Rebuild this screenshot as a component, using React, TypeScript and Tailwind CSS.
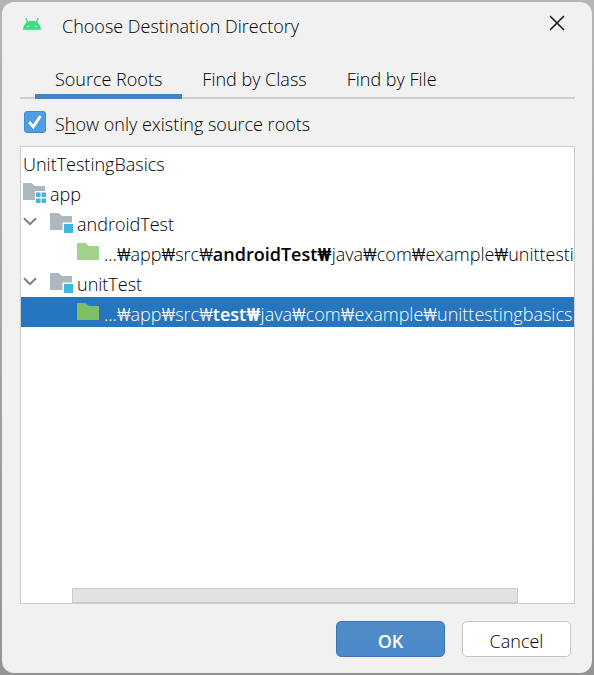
import { useState } from "react";
import type { ReactNode } from "react";

const TABS = ["Source Roots", "Find by Class", "Find by File"];

function AndroidIcon() {
  return (
    <svg width="20" height="14" viewBox="0 0 20 14" fill="none" aria-hidden className="shrink-0">
      <path d="M1 12.8C1.300 7.200 5 3.800 10 3.800s8.700 3.400 9 9Z" fill="#3ddc84" />
      <path d="M5.800 5.600 4 1.500M14.200 5.600 16 1.500" stroke="#3ddc84" strokeWidth="1.300" strokeLinecap="round" />
      <circle cx="5.900" cy="9.500" r="0.800" fill="#f1f1f1" />
      <circle cx="14.100" cy="9.500" r="0.800" fill="#f1f1f1" />
    </svg>
  );
}

function CloseIcon() {
  return (
    <svg width="16" height="16" viewBox="0 0 16 16" fill="none" aria-hidden>
      <path d="M1 1l14 14M15 1L1 15" stroke="#111" strokeWidth="1.500" />
    </svg>
  );
}

function ChevronDown() {
  return (
    <svg width="14" height="9" viewBox="0 0 14 9" fill="none" aria-hidden>
      <path d="M1 1.200l6 6 6-6" stroke="#7f7f7f" strokeWidth="2" />
    </svg>
  );
}

function FolderIcon({ kind }: { kind: "group" | "module" | "test" | "testSelected" }) {
  const fill =
    kind === "test" ? "#a0d38c" : kind === "testSelected" ? "#7fbf63" : "#adb8be";
  return (
    <svg width="24" height="22" viewBox="0 0 24 22" aria-hidden className="shrink-0">
      {kind === "group" && (
        <>
          <path d="M0 2h8.500L12 5h10v5H12v9H0Z" fill={fill} />
          <path d="M13 11.500h4.500V16H13ZM18.500 11.500H23V16h-4.500ZM13 17.500h4.500V22H13ZM18.500 17.500H23V22h-4.500Z" fill="#40b6e0" />
        </>
      )}
      {kind === "module" && (
        <>
          <path d="M0 2h8.500L12 5h10v6.500h-9.500V19H0Z" fill={fill} />
          <path d="M14 13h9v9h-9Z" fill="#40b6e0" />
        </>
      )}
      {(kind === "test" || kind === "testSelected") && (
        <path d="M0 2h8.500L12 5h10v14H0Z" fill={fill} />
      )}
    </svg>
  );
}

function TreeRow({ children, selected }: { children: ReactNode; selected?: boolean }) {
  return (
    <li
      role="treeitem"
      aria-selected={!!selected}
      className={
        selected
          ? "flex h-[30px] items-center whitespace-nowrap bg-[#2675bf] text-white"
          : "flex h-[30px] items-center whitespace-nowrap"
      }
    >
      {children}
    </li>
  );
}

function ModuleRow({ name }: { name: string }) {
  return (
    <TreeRow>
      <button type="button" aria-label={`Collapse ${name}`} className="w-[29px] shrink-0 pb-[2px] pl-[2px]">
        <ChevronDown />
      </button>
      <FolderIcon kind="module" />
      <span className="pl-[3px] pt-1">{name}</span>
    </TreeRow>
  );
}

function Won() {
  return <span className="font-[Roboto,sans-serif] leading-none">₩</span>;
}

function PathRow({ root, selected }: { root: string; selected?: boolean }) {
  return (
    <TreeRow selected={selected}>
      <span className="w-14 shrink-0" />
      <FolderIcon kind={selected ? "testSelected" : "test"} />
      <span className="pl-[3px] pt-1">
        ...<Won />app<Won />src<Won />
        <b className="font-semibold">{root}<Won /></b>
        java<Won />com<Won />example<Won />unittestingbasics
      </span>
    </TreeRow>
  );
}

export default function App() {
  const [tab, setTab] = useState(0);
  const [existingOnly, setExistingOnly] = useState(true);

  return (
    <div className="flex min-h-screen flex-col bg-linear-to-b from-[#b5b5b5] to-[#949494] p-[2px] font-['Open_Sans','Noto_Sans_CJK_KR',sans-serif] text-[18px] font-light leading-6 text-black">
      <div
        role="dialog"
        aria-labelledby="dialog-title"
        className="flex grow flex-col rounded-xl bg-[#f1f1f1] pl-[18px] pr-[17px]"
      >
        <header className="flex h-[58px] items-start pt-3">
          <div className="w-[42px] shrink-0 pl-[2px] pt-[3px]">
            <AndroidIcon />
          </div>
          <h1 id="dialog-title" className="grow">Choose Destination Directory</h1>
          <button type="button" aria-label="Close" className="mr-[10px] mt-[1px]">
            <CloseIcon />
          </button>
        </header>

        <div role="tablist" className="flex h-[39px] border-b-2 border-[#cfcfcf] pl-[15px]">
          {TABS.map((label, i) => (
            <button
              key={label}
              type="button"
              role="tab"
              aria-selected={tab === i}
              onClick={() => setTab(i)}
              className={
                tab === i
                  ? "h-[39px] border-b-5 border-[#4083c9] px-5 pt-1"
                  : "h-[39px] border-b-5 border-transparent px-5 pt-1"
              }
            >
              {label}
            </button>
          ))}
        </div>

        <label className="flex h-[47px] items-center">
          <span className="relative mb-[2px] ml-1 mr-[9px] size-[22px] shrink-0">
            <input
              type="checkbox"
              checked={existingOnly}
              onChange={(e) => setExistingOnly(e.target.checked)}
              className="block size-[22px] appearance-none rounded-[3px] border border-[#4389ce] bg-white checked:bg-[#4f9ee3]"
            />
            {existingOnly && (
              <svg width="22" height="22" viewBox="0 0 22 22" fill="none" aria-hidden className="pointer-events-none absolute inset-0">
                <path d="M5.200 11l4 4.800L16.500 5" stroke="#fff" strokeWidth="2.800" />
              </svg>
            )}
          </span>
          <span className="pt-[2px]">
            S<u className="underline-offset-2">h</u>ow only existing source roots
          </span>
        </label>

        <div className="flex grow flex-col overflow-hidden border border-[#cdcdcd] bg-white">
          <ul role="tree">
            <TreeRow>
              <span className="pl-[2px] pt-1">UnitTestingBasics</span>
            </TreeRow>
            <TreeRow>
              <span className="pl-[2px]">
                <FolderIcon kind="group" />
              </span>
              <span className="pl-[3px] pt-1">app</span>
            </TreeRow>
            <ModuleRow name="androidTest" />
            <PathRow root="androidTest" />
            <ModuleRow name="unitTest" />
            <PathRow root="test" selected />
          </ul>
          <div className="mt-auto pl-[51px] pr-14">
            <div className="h-[15px] border border-[#cbcbcb] bg-[#e2e2e2]" />
          </div>
        </div>

        <footer className="flex h-[69px] items-start justify-end gap-[17px] pr-1 pt-[17px]">
          <button
            type="button"
            className="h-9 w-[109px] rounded-[5px] border border-[#3d75b2] bg-linear-to-b from-[#528cc7] to-[#4989cc] pt-1 font-semibold text-white"
          >
            OK
          </button>
          <button
            type="button"
            className="h-9 w-[109px] rounded-[5px] border border-[#c4c4c4] bg-white pt-1"
          >
            Cancel
          </button>
        </footer>
      </div>
    </div>
  );
}
